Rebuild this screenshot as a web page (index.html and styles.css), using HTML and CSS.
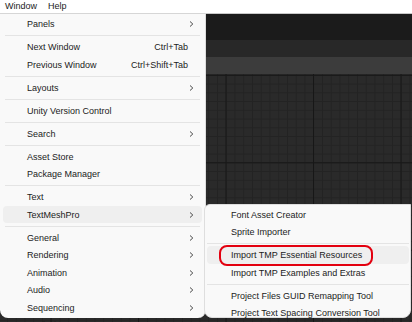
FILE: index.html
```html
<!DOCTYPE html>
<html>
<head>
<meta charset="utf-8">
<link rel="stylesheet" href="styles.css">
</head>
<body>
<div class="menubar"><span>Window</span><span>Help</span></div>
<div class="stage">
  <div class="editor">
    <div class="band band-1"></div>
    <div class="band band-2"></div>
    <div class="band band-3"></div>
    <div class="grid"></div>
  </div>

  <div class="menu main-menu">
    <div class="item"><span>Panels</span><svg class="chev" viewBox="0 0 5 8"><path d="M1 1.5L3.8 4L1 6.5"/></svg></div>
    <div class="sep"></div>
    <div class="item"><span>Next Window</span><span class="key">Ctrl+Tab</span></div>
    <div class="item"><span>Previous Window</span><span class="key">Ctrl+Shift+Tab</span></div>
    <div class="sep"></div>
    <div class="item"><span>Layouts</span><svg class="chev" viewBox="0 0 5 8"><path d="M1 1.5L3.8 4L1 6.5"/></svg></div>
    <div class="sep"></div>
    <div class="item"><span>Unity Version Control</span></div>
    <div class="sep"></div>
    <div class="item"><span>Search</span><svg class="chev" viewBox="0 0 5 8"><path d="M1 1.5L3.8 4L1 6.5"/></svg></div>
    <div class="sep"></div>
    <div class="item"><span>Asset Store</span></div>
    <div class="item"><span>Package Manager</span></div>
    <div class="sep"></div>
    <div class="item"><span>Text</span><svg class="chev" viewBox="0 0 5 8"><path d="M1 1.5L3.8 4L1 6.5"/></svg></div>
    <div class="item active"><span>TextMeshPro</span><svg class="chev" viewBox="0 0 5 8"><path d="M1 1.5L3.8 4L1 6.5"/></svg></div>
    <div class="sep"></div>
    <div class="item"><span>General</span><svg class="chev" viewBox="0 0 5 8"><path d="M1 1.5L3.8 4L1 6.5"/></svg></div>
    <div class="item"><span>Rendering</span><svg class="chev" viewBox="0 0 5 8"><path d="M1 1.5L3.8 4L1 6.5"/></svg></div>
    <div class="item"><span>Animation</span><svg class="chev" viewBox="0 0 5 8"><path d="M1 1.5L3.8 4L1 6.5"/></svg></div>
    <div class="item"><span>Audio</span><svg class="chev" viewBox="0 0 5 8"><path d="M1 1.5L3.8 4L1 6.5"/></svg></div>
    <div class="item"><span>Sequencing</span><svg class="chev" viewBox="0 0 5 8"><path d="M1 1.5L3.8 4L1 6.5"/></svg></div>
    <div class="item"><span>Analysis</span><svg class="chev" viewBox="0 0 5 8"><path d="M1 1.5L3.8 4L1 6.5"/></svg></div>
  </div>

  <div class="menu sub-menu">
    <div class="item"><span>Font Asset Creator</span></div>
    <div class="item"><span>Sprite Importer</span></div>
    <div class="sep wide"></div>
    <div class="item active"><span>Import TMP Essential Resources</span></div>
    <div class="item"><span>Import TMP Examples and Extras</span></div>
    <div class="sep wide"></div>
    <div class="item"><span>Project Files GUID Remapping Tool</span></div>
    <div class="item"><span>Project Text Spacing Conversion Tool</span></div>
    <div class="callout"></div>
  </div>
</div>
</body>
</html>
```

FILE: styles.css
```css
* { box-sizing: border-box; }

html, body {
  margin: 0;
  padding: 0;
  width: 412px;
  height: 322px;
  overflow: hidden;
  background: #ffffff;
  font-family: "Liberation Sans", Arial, sans-serif;
  font-size: 9px;
  color: #1b1b1b;
}

.menubar {
  height: 13px;
  display: flex;
  align-items: center;
  gap: 11px;
  padding-left: 5px;
  line-height: 13px;
  background: #ffffff;
}

.stage {
  position: relative;
  height: 309px;
}

.editor {
  display: flex;
  flex-direction: column;
  height: 100%;
  border-top: 1px solid #c9c9c9;
}

.band-1 { height: 26px; background: #1b1b1b; }
.band-2 { height: 17px; background: #282828; }
.band-3 { height: 17px; background: #3c3c3c; }

.grid {
  flex: 1;
  background-color: #2a2a2a;
  background-image:
    linear-gradient(to right, #171717 1px, transparent 1px),
    linear-gradient(to bottom, #171717 1px, transparent 1px),
    linear-gradient(to right, #232323 1px, transparent 1px),
    linear-gradient(to bottom, #232323 1px, transparent 1px);
  background-size: 87.5px 100%, 100% 87.5px, 8.75px 100%, 100% 8.75px;
  background-position: 313px 0, 0 0.8px, 7px 0, 0 0.8px;
}

.menu {
  position: absolute;
  background: #f9f9f9;
}

.main-menu {
  left: 0;
  top: 0;
  width: 206px;
  height: 305px;
  border-top: 1px solid #d6d6d6;
  border-right: 1px solid #dddddd;
  border-radius: 0 0 8px 8px;
  padding: 1.25px 3px 0 3px;
}

.sub-menu {
  left: 204px;
  top: 191px;
  width: 207px;
  height: 114px;
  border: 1px solid #dedede;
  border-radius: 6px 0 8px 8px;
  padding: 0.75px 1px 0 2px;
}

.item {
  height: 17.5px;
  display: flex;
  align-items: center;
  justify-content: space-between;
  padding: 0 8px 0 24px;
  white-space: nowrap;
}

.item.active {
  background: #efefef;
  border-radius: 4px;
}

.key {
  padding-right: 6px;
}

.chev {
  width: 5px;
  height: 8px;
  fill: none;
  stroke: #4a4a4a;
  stroke-width: 1;
}

.sep {
  height: 1px;
  margin: 2.25px 2px;
  background: #e4e4e4;
}

.sep.wide {
  margin: 2.25px 0;
}

.callout {
  position: absolute;
  left: 14px;
  top: 40px;
  width: 154px;
  height: 21px;
  border: 2.5px solid #e3000f;
  border-radius: 8px;
}
```
